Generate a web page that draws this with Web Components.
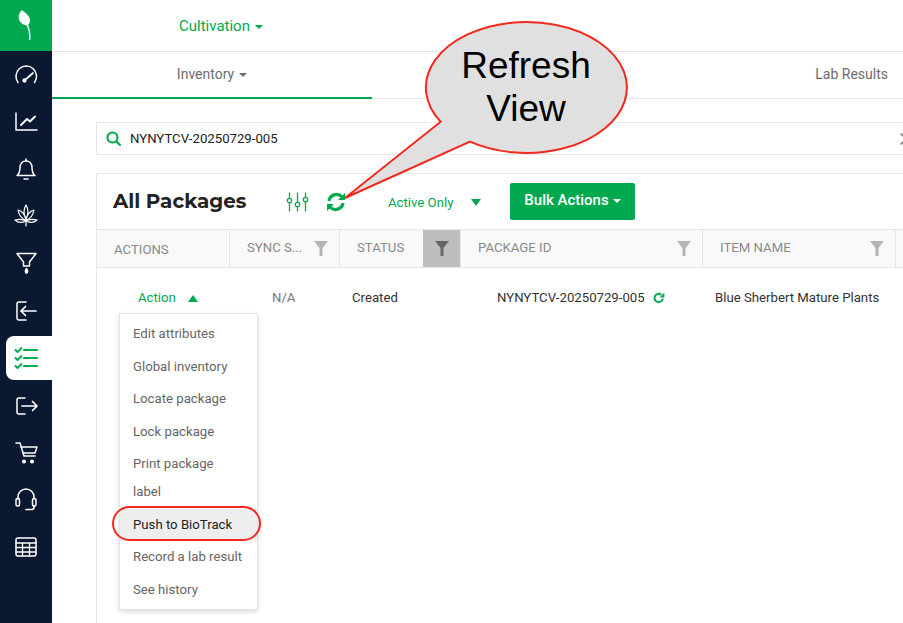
<!DOCTYPE html>
<html>
<head>
<meta charset="utf-8">
<style>
html, body { margin: 0; height: 100%; overflow: hidden; background: #fff; }
body { font-family: Roboto, "Liberation Sans", sans-serif; }
app-shell { width: 903px; height: 623px; }
</style>
</head>
<body>
<app-shell>
  <side-nav slot="nav"></side-nav>
  <top-bar slot="top"></top-bar>
  <search-box slot="main"></search-box>
  <packages-panel slot="main"></packages-panel>
</app-shell>
<callout-bubble></callout-bubble>
<pill-mark></pill-mark>

<script>
const GREEN = '#00a94f';

class AppShell extends HTMLElement {
    constructor() {
        super();
        this.attachShadow({ mode: 'open' });
        this.shadowRoot.innerHTML = `
            <style>
                :host { display: flex; overflow: hidden; }
                .content { flex: 1; min-width: 0; display: flex; flex-direction: column; }
                .main { padding: 23px 0 0 44px; display: flex; flex-direction: column; gap: 18px; }
            </style>
            <slot name="nav"></slot>
            <div class="content">
                <slot name="top"></slot>
                <div class="main"><slot name="main"></slot></div>
            </div>
        `;
    }
}

class SideNav extends HTMLElement {
    constructor() {
        super();
        this.attachShadow({ mode: 'open' });
        this.shadowRoot.innerHTML = `
            <style>
                :host { display: flex; flex-direction: column; width: 52px; height: 623px; background: #0a1832; flex-shrink: 0; }
                .logo { height: 51px; background: ${GREEN}; }
                .logo svg { display: block; }
                .items { display: flex; flex-direction: column; }
                .item { height: 47.2px; display: flex; align-items: center; justify-content: center; }
                .item svg { width: 26px; height: 26px; fill: none; stroke: #fff; stroke-width: 1.5; stroke-linecap: round; stroke-linejoin: round; }
                .active { height: 44px; margin: 1.8px 0 2.4px 6px; background: #fff; border-radius: 8px 0 0 8px; padding-right: 6px; }
                .active svg { stroke: ${GREEN}; }
            </style>
            <div class="logo">
                <svg width="52" height="51" viewBox="0 0 52 51">
                    <path d="M21.500 10 C26 12.500 30.500 17 30 21 C29.500 24.500 28 25.500 26.500 25.500 C21.500 24.500 18 21 18.800 15.500 C19.200 13.500 20.500 11.500 21.500 10Z" fill="#fff"/>
                    <path d="M26.500 23 C29 28 30.300 33 29.700 39.500" fill="none" stroke="#fff" stroke-width="1.500" stroke-linecap="round"/>
                </svg>
            </div>
            <div class="items">
                <div class="item"><svg viewBox="0 0 26 26"><path d="M5 20.500 A10.300 10.300 0 1 1 21.500 20.500"/><path d="M12 18 L20 11" stroke-width="1.800"/><circle cx="11.500" cy="18.500" r="1.400" fill="#fff"/></svg></div>
                <div class="item"><svg viewBox="0 0 26 26"><path d="M3 4 V21 H24"/><path d="M8 16 L14 10 L17 12.500 L22 7.500" stroke-width="1.900"/></svg></div>
                <div class="item"><svg viewBox="0 0 26 26"><path d="M4 19.500 C6 18 7 16 7 11.500 C7 7.500 9.500 5 13 5 C16.500 5 19 7.500 19 11.500 C19 16 20 18 22 19.500 Z"/><path d="M13 3 V5"/><path d="M11 23 H15"/></svg></div>
                <div class="item"><svg viewBox="0 0 26 26"><path d="M13 2 C15.500 6 15.500 11 13 16 C10.500 11 10.500 6 13 2Z M5 7 C9 8 12 12 13 17 C8.500 16 6 12 5 7Z M21 7 C17 8 14 12 13 17 C17.500 16 20 12 21 7Z M2 17 C6 16 10 16 13 18 C9 20 5 20 2 17Z M24 17 C20 16 16 16 13 18 C17 20 21 20 24 17Z M13 18 V23" stroke-width="1.200"/></svg></div>
                <div class="item"><svg viewBox="0 0 26 26"><path d="M4 3.500 H23 L16.500 12 V16 H10.500 V12 Z"/><path d="M13.500 18.500 C15 20.500 15 23 13.500 23 C12 23 12 20.500 13.500 18.500Z" fill="#fff"/></svg></div>
                <div class="item"><svg viewBox="0 0 26 26"><path d="M13 4 H6 A2 2 0 0 0 4 6 V20 A2 2 0 0 0 6 22 H13"/><path d="M23 13 H8 M12.500 8.500 L8 13 L12.500 17.500" stroke-width="1.700"/></svg></div>
                <div class="item active"><svg viewBox="0 0 26 26"><path d="M2.500 5 L4.500 7 L8.500 3 M2.500 13 L4.500 15 L8.500 11 M2.500 21 L4.500 23 L8.500 19" stroke-width="1.800"/><path d="M11 5 H24 M11 13 H24 M11 21 H24" stroke-width="2"/></svg></div>
                <div class="item"><svg viewBox="0 0 26 26"><path d="M12 5 H6 A2 2 0 0 0 4 7 V19 A2 2 0 0 0 6 21 H12"/><path d="M9 13 H24 M19.500 8.500 L24 13 L19.500 17.500" stroke-width="1.700"/></svg></div>
                <div class="item"><svg viewBox="0 0 26 26"><path d="M3 3 H7 L11 16 H22"/><path d="M8 7 H24 L22 13 H10"/><circle cx="11" cy="21.500" r="1.300" fill="#fff"/><circle cx="19" cy="21.500" r="1.300" fill="#fff"/></svg></div>
                <div class="item"><svg viewBox="0 0 26 26"><path d="M5 12 V10 A8 8 0 0 1 21 10 V12"/><rect x="3" y="11.500" width="3.500" height="7.500" rx="1.500"/><rect x="19.500" y="11.500" width="3.500" height="7.500" rx="1.500"/><path d="M21 19 V20.500 A2 2 0 0 1 19 22.500 H13" stroke-width="1.700"/></svg></div>
                <div class="item"><svg viewBox="0 0 26 26"><rect x="3" y="4" width="20" height="18" rx="2"/><path d="M3 9 H23 M3 13.500 H23 M3 18 H23 M9.500 9 V22 M16.500 9 V22" stroke-width="1.300"/></svg></div>
            </div>
        `;
    }
}

class TopBar extends HTMLElement {
    constructor() {
        super();
        this.attachShadow({ mode: 'open' });
        this.shadowRoot.innerHTML = `
            <style>
                :host { display: block; }
                .row1 { height: 51px; border-bottom: 1px solid #e6e6e6; display: flex; align-items: center; padding-left: 127px; color: ${GREEN}; font-size: 15px; }
                .row2 { height: 46px; border-bottom: 1px solid #e6e6e6; display: flex; color: #6d6d6d; font-size: 14px; }
                .tab { width: 320px; box-sizing: border-box; height: 47px; padding-bottom: 2px; display: flex; align-items: center; justify-content: center; border-bottom: 2px solid ${GREEN}; }
                .lab { margin-left: auto; align-self: center; padding: 0 15px 2px 0; }
                .caret { width: 0; height: 0; border: 4px solid transparent; border-top-color: currentColor; border-bottom: 0; margin-left: 5px; display: inline-block; vertical-align: middle; }
            </style>
            <div class="row1"><span>Cultivation<i class="caret"></i></span></div>
            <div class="row2">
                <div class="tab"><span>Inventory<i class="caret"></i></span></div>
                <div class="lab">Lab Results</div>
            </div>
        `;
    }
}

class SearchBox extends HTMLElement {
    constructor() {
        super();
        this.attachShadow({ mode: 'open' });
        this.shadowRoot.innerHTML = `
            <style>
                :host { display: flex; align-items: center; height: 31px; border: 1px solid #e6e6e6; border-right: 0; border-radius: 2px 0 0 2px; padding-left: 9px; gap: 9px; font-size: 13.200px; color: #222; }
                svg { width: 15px; height: 15px; fill: none; stroke: ${GREEN}; stroke-width: 2.200; stroke-linecap: round; flex-shrink: 0; }
                svg.x { width: 12px; height: 12px; margin: 0 -9px 0 auto; stroke: #777; stroke-width: 1.500; }
            </style>
            <svg viewBox="0 0 15 15"><circle cx="6.500" cy="6.500" r="5"/><path d="M10.500 10.500 L14 14"/></svg>
            <span>NYNYTCV-20250729-005</span>
            <svg class="x" viewBox="0 0 12 12"><path d="M1 1 L11 11 M11 1 L1 11"/></svg>
        `;
    }
}

class PackagesPanel extends HTMLElement {
    constructor() {
        super();
        this.attachShadow({ mode: 'open' });
        this.shadowRoot.innerHTML = `
            <style>
                :host { display: block; border: 1px solid #e6e6e6; border-right: 0; height: 460px; }
                .head { height: 55px; display: flex; align-items: center; }
                h2 { margin: -2px 0 0 16px; width: 172px; font: 700 19.900px Montserrat, "Open Sans", "DejaVu Sans", sans-serif; color: #222; white-space: nowrap; }
                .tools { display: flex; align-items: center; gap: 17px; width: 103px; }
                .tools svg { display: block; fill: none; stroke: ${GREEN}; }
                .filter { display: flex; align-items: center; width: 122px; color: ${GREEN}; font-size: 13.200px; padding-top: 1px; }
                .filter i { width: 0; height: 0; border: 5px solid transparent; border-top: 7px solid ${GREEN}; border-bottom: 0; margin-left: 18px; }
                button { border: 0; background: ${GREEN}; color: #fff; border-radius: 2px; width: 125px; height: 37px; font: 500 15px Roboto, sans-serif; padding: 0 0 3px; }
                button i { display: inline-block; width: 0; height: 0; border: 4px solid transparent; border-top-color: #fff; border-bottom: 0; margin-left: 4px; vertical-align: middle; }
                .cols { display: grid; grid-template-columns: 133px 110px 121px 242px 193px 1fr; height: 37px; background: #f9f9f9; border-top: 1px solid #e6e6e6; border-bottom: 1px solid #e6e6e6; font-size: 13.200px; color: #8a8a8a; }
                .row { display: grid; grid-template-columns: 133px 110px 121px 242px 193px 1fr; height: 59px; font-size: 13.200px; color: #333; align-items: center; }
            </style>
            <div class="head">
                <h2>All Packages</h2>
                <div class="tools">
                    <svg width="24" height="24" viewBox="0 0 24 24" stroke-width="1.300" stroke-linecap="round">
                        <path d="M4.500 3 V8.300 M4.500 12.700 V21 M12.500 3 V12.300 M12.500 16.700 V21 M20.500 3 V7.300 M20.500 11.700 V21"/>
                        <circle cx="4.500" cy="10.500" r="2.200"/><circle cx="12.500" cy="14.500" r="2.200"/><circle cx="20.500" cy="9.500" r="2.200"/>
                    </svg>
                    <refresh-icon size="20"></refresh-icon>
                </div>
                <div class="filter">Active Only<i></i></div>
                <button>Bulk Actions<i></i></button>
            </div>
            <div class="cols">
                <col-head nofilter pad="17" low>ACTIONS</col-head>
                <col-head pad="17">SYNC S...</col-head>
                <col-head pad="17" active>STATUS</col-head>
                <col-head pad="17">PACKAGE ID</col-head>
                <col-head pad="17">ITEM NAME</col-head>
                <col-head nofilter noborder></col-head>
            </div>
            <div class="row">
                <action-menu></action-menu>
                <span style="padding-left:42px;color:#777">N/A</span>
                <span style="padding-left:12px">Created</span>
                <span style="padding-left:36px;display:flex;align-items:center;gap:8px">NYNYTCV-20250729-005 <refresh-icon size="12" simple></refresh-icon></span>
                <span style="padding-left:12px;white-space:nowrap">Blue Sherbert Mature Plants</span>
            </div>
        `;
    }
}

class ColHead extends HTMLElement {
    connectedCallback() {
        const pad = this.getAttribute('pad') || 0;
        const nofilter = this.hasAttribute('nofilter');
        const active = this.hasAttribute('active');
        this.attachShadow({ mode: 'open' });
        this.shadowRoot.innerHTML = `
            <style>
                :host { display: flex; align-items: center; justify-content: space-between; padding-left: ${pad}px; border-right: ${this.hasAttribute('noborder') ? 0 : '1px solid #e6e6e6'}; white-space: nowrap; overflow: hidden; }
                span { ${this.hasAttribute('low') ? 'padding-top: 2px' : 'padding-bottom: 2px'}; }
                .f { width: 37px; height: 37px; display: flex; align-items: center; justify-content: center; background: ${active ? '#bdbdbd' : 'transparent'}; }
                svg { width: 14px; height: 15px; fill: ${active ? '#666' : '#b4b4b4'}; }
            </style>
            <span><slot></slot></span>
            ${nofilter ? '' : '<div class="f"><svg viewBox="0 0 14 15"><path d="M0 0 H14 L8.500 7 V15 H5.500 V7 Z"/></svg></div>'}
        `;
    }
}

class RefreshIcon extends HTMLElement {
    connectedCallback() {
        const size = this.getAttribute('size') || 20;
        this.attachShadow({ mode: 'open' });
        this.shadowRoot.innerHTML = `
            <style>
                :host { display: inline-flex; }
                svg { width: ${size}px; height: ${size}px; fill: none; stroke: ${GREEN}; stroke-width: 3.200; }
                path.h { fill: ${GREEN}; stroke: none; }
            </style>
            ${this.hasAttribute('simple')
                ? `<svg viewBox="0 0 20 20"><path d="M16.500 11 A7 7 0 1 1 14 4.500"/><path class="h" d="M11 9 H19 V1 Z"/></svg>`
                : `<svg viewBox="0 0 20 20"><path d="M3 9 A7.500 7.500 0 0 1 16 5"/><path class="h" d="M12 8 H19 V1 Z"/><path d="M17 11 A7.500 7.500 0 0 1 4 15"/><path class="h" d="M8 12 H1 V19 Z"/></svg>`}
        `;
    }
}

class ActionMenu extends HTMLElement {
    constructor() {
        super();
        this.attachShadow({ mode: 'open' });
        const items = ['Edit attributes', 'Global inventory', 'Locate package', 'Lock package', 'Print package<br>label', 'Push to BioTrack', 'Record a lab result', 'See history'];
        this.shadowRoot.innerHTML = `
            <style>
                :host { display: block; position: relative; height: 59px; }
                .trig { position: absolute; left: 41px; top: 21px; color: ${GREEN}; font-size: 13.200px; display: flex; align-items: center; gap: 12px; line-height: 18px; }
                .trig i { width: 0; height: 0; border: 5px solid transparent; border-bottom: 7px solid ${GREEN}; border-top: 0; }
                .menu { position: absolute; left: 22px; top: 45px; width: 139px; box-sizing: border-box; background: #fff; border: 1px solid #e4e4e4; box-shadow: 0 2px 5px rgba(0,0,0,.15); border-radius: 2px; padding: 4px 0 3px; font-size: 13.200px; color: #666; }
                .menu div { padding: 2px 13px; line-height: 28.500px; }
                .menu div.two { line-height: 28px; padding-bottom: 2.500px; }
                .menu div.on { background: #eee; color: #222; }
            </style>
            <div class="trig">Action<i></i></div>
            <div class="menu">${items.map(t => `<div class="${t.startsWith('Push') ? 'on' : t.startsWith('Print') ? 'two' : ''}">${t}</div>`).join('')}</div>
        `;
    }
}

class CalloutBubble extends HTMLElement {
    constructor() {
        super();
        this.attachShadow({ mode: 'open' });
        this.shadowRoot.innerHTML = `
            <style>
                :host { position: absolute; left: 340px; top: 18px; width: 300px; height: 200px; }
                svg { position: absolute; inset: 0; }
                .t { position: absolute; left: 86px; top: 26px; width: 200px; text-align: center; font: 37px/43px "Liberation Sans", sans-serif; color: #000; }
            </style>
            <svg width="300" height="200" viewBox="340 18 300 200">
                <path d="M440.700 121.700 A100.500 65.500 0 1 1 470 141.700 L345 198 Z" fill="#e0e0e0" stroke="#f4281c" stroke-width="2" stroke-linejoin="miter"/>
            </svg>
            <div class="t">Refresh<br>View</div>
        `;
    }
}

class PillMark extends HTMLElement {
    constructor() {
        super();
        this.attachShadow({ mode: 'open' });
        this.shadowRoot.innerHTML = `
            <style>
                :host { position: absolute; left: 112px; top: 506px; width: 149px; height: 35px; border: 2px solid #f4281c; border-radius: 18px; box-sizing: border-box; }
            </style>
        `;
    }
}

customElements.define('app-shell', AppShell);
customElements.define('side-nav', SideNav);
customElements.define('top-bar', TopBar);
customElements.define('search-box', SearchBox);
customElements.define('col-head', ColHead);
customElements.define('refresh-icon', RefreshIcon);
customElements.define('action-menu', ActionMenu);
customElements.define('packages-panel', PackagesPanel);
customElements.define('callout-bubble', CalloutBubble);
customElements.define('pill-mark', PillMark);
</script>
</body>
</html>
